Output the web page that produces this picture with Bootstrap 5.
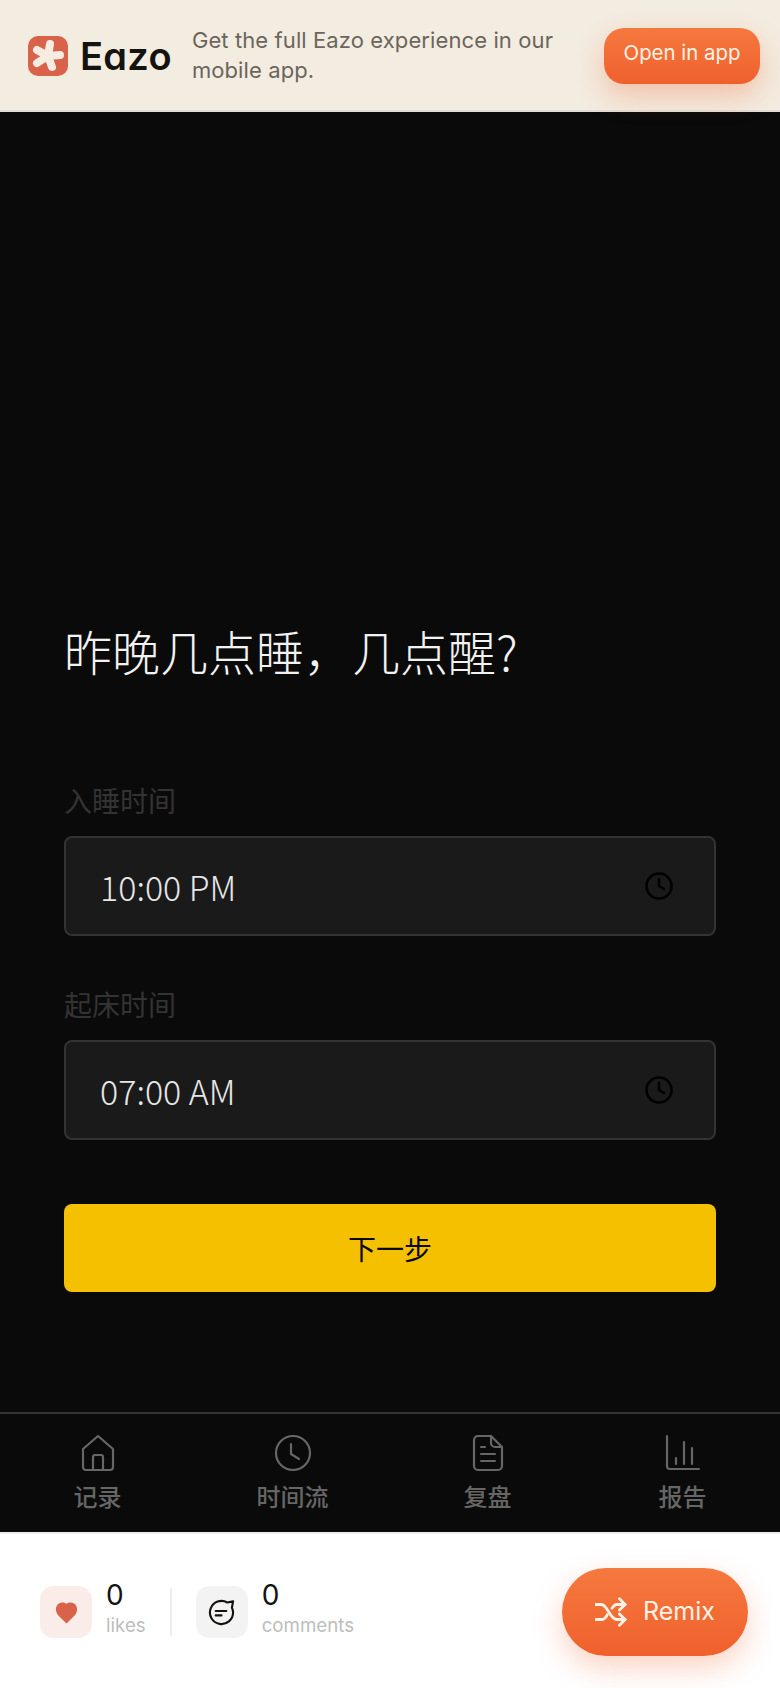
<!DOCTYPE html>
<html lang="en">
<head>
    <meta charset="UTF-8">
    <meta name="viewport" content="width=device-width, initial-scale=1.0">
    <title>Eazo</title>
    <link href="https://cdn.jsdelivr.net/npm/bootstrap@5.3.0/dist/css/bootstrap.min.css" rel="stylesheet">
    <style>
        body { width: 780px; height: 1688px; overflow: hidden; background: #fff; font-family: Inter, "Noto Sans CJK SC", sans-serif; }
        .app-banner { height: 112px; background: #f3ece0; border-bottom: 2px solid #e2ded6; padding: 2px 20px 0 28px; position: relative; z-index: 2; }
        .brand-word { font-size: 38px; font-weight: 600; color: #14130f; line-height: 1; margin-left: 12px; letter-spacing: .3px; font-feature-settings: "cv11"; }
        .banner-text { font-size: 22px; line-height: 30px; color: #6b655d; margin: 0 0 2px 20px; width: 400px; letter-spacing: .1px; }
        .open-btn { width: 156px; height: 56px; border: 0; border-radius: 20px; color: #fff3e6; font-size: 20.4px; padding: 0 0 6px; background: linear-gradient(#f5793f, #f0602c); box-shadow: 0 12px 28px rgba(240, 96, 44, .3); }
        .open-btn:hover { color: #fff3e6; }
        .quiz-screen { height: 1420px; background: #0a0a0a; }
        .quiz-body { height: 1300px; padding: 508px 64px 0; }
        .quiz-title { font-family: "Noto Sans CJK SC", sans-serif; font-size: 48px; font-weight: 300; line-height: 60px; color: #f2f2f2; margin: 0; }
        .time-label { font-family: "Noto Sans CJK SC", sans-serif; font-size: 28px; font-weight: 400; line-height: 36px; color: #333; margin-bottom: 18px; }
        .first-field { margin-top: 102px; }
        .second-field { margin-top: 50px; }
        .time-box { height: 100px; padding: 0 40px 0 34px; background: #1a1a1a; border: 2px solid #333; border-radius: 8px; color: #e6e6e6; font-family: "Noto Sans CJK SC", sans-serif; font-size: 34px; font-weight: 300; font-variant-numeric: tabular-nums; }
        .next-btn { width: 100%; height: 88px; margin-top: 64px; border: 0; border-radius: 8px; background: #f5c000; color: #0a0a0a; font-family: "Noto Sans CJK SC", sans-serif; font-size: 28px; }
        .next-btn:hover { background: #f5c000; color: #0a0a0a; }
        .tab-bar { height: 120px; border-top: 2px solid #333; }
        .tab-item { width: 195px; padding-top: 20px; color: #666; font-family: "Noto Sans CJK SC", sans-serif; font-size: 24px; font-weight: 500; line-height: 32px; }
        .tab-item svg { display: block; margin-bottom: 8px; }
        .action-bar { height: 156px; padding: 2px 32px 0 40px; border-top: 2px solid #eee; }
        .stat-icon { width: 52px; height: 52px; border-radius: 14px; }
        .stat-num { font-size: 28px; line-height: 30px; color: #14130f; margin-bottom: 4px; }
        .stat-name { font-size: 18.7px; line-height: 24px; color: #bdbdbd; }
        .stat-rule { width: 2px; height: 48px; background: #eee; margin: 0 24px 0 24px; }
        .stat-text { margin: 0 0 6px 14px; }
        .heart-box { background: #f9ece9; }
        .chat-box { background: #f3f3f3; }
        .remix-btn { width: 186px; height: 88px; border: 0; border-radius: 44px; color: #fff3e6; font-size: 25px; background: linear-gradient(#f5793f, #f0602c); box-shadow: 0 12px 30px rgba(240, 96, 44, .28); }
        .remix-btn:hover { color: #fff3e6; }
    </style>
</head>
<body>
    <div class="app-banner d-flex align-items-center">
        <svg width="40" height="40" viewBox="0 0 40 40">
            <rect width="40" height="40" rx="10" fill="#d9634a"/>
            <g stroke="#f6ece2" stroke-width="8" stroke-linecap="round">
                <line x1="20" y1="20" x2="22" y2="8"/>
                <line x1="20" y1="20" x2="32" y2="19"/>
                <line x1="20" y1="20" x2="24" y2="31"/>
                <line x1="20" y1="20" x2="9" y2="27"/>
                <line x1="20" y1="20" x2="9" y2="14"/>
            </g>
        </svg>
        <span class="brand-word">Eazo</span>
        <div class="banner-text flex-grow-1">Get the full Eazo experience in our mobile app.</div>
        <button class="btn open-btn flex-shrink-0">Open in app</button>
    </div>

    <div class="quiz-screen">
        <div class="quiz-body">
            <h1 class="quiz-title">昨晚几点睡&#65292;几点醒?</h1>
            <div class="time-label first-field">入睡时间</div>
            <div class="time-box d-flex align-items-center justify-content-between">
                <span>10:00 PM</span>
                <svg width="30" height="30" viewBox="0 0 30 30" fill="none" stroke="#000" stroke-width="2.6" stroke-linecap="round" stroke-linejoin="round"><circle cx="15" cy="15" r="12.5"/><path d="M15 8v7l5 3"/></svg>
            </div>
            <div class="time-label second-field">起床时间</div>
            <div class="time-box d-flex align-items-center justify-content-between">
                <span>07:00 AM</span>
                <svg width="30" height="30" viewBox="0 0 30 30" fill="none" stroke="#000" stroke-width="2.6" stroke-linecap="round" stroke-linejoin="round"><circle cx="15" cy="15" r="12.5"/><path d="M15 8v7l5 3"/></svg>
            </div>
            <button class="btn next-btn">下一步</button>
        </div>
        <div class="tab-bar d-flex">
            <div class="tab-item d-flex flex-column align-items-center">
                <svg width="36" height="38" viewBox="0 0 36 38" fill="none" stroke="#666" stroke-width="2.2" stroke-linejoin="round"><path d="M3 15 18 2l15 13v18a3 3 0 0 1-3 3H6a3 3 0 0 1-3-3z"/><path d="M13 36V23a2 2 0 0 1 2-2h6a2 2 0 0 1 2 2v13"/></svg>
                记录
            </div>
            <div class="tab-item d-flex flex-column align-items-center">
                <svg width="38" height="38" viewBox="0 0 38 38" fill="none" stroke="#666" stroke-width="2.2" stroke-linecap="round" stroke-linejoin="round"><circle cx="19" cy="19" r="17"/><path d="M17 10v10l8 5"/></svg>
                时间流
            </div>
            <div class="tab-item d-flex flex-column align-items-center">
                <svg width="32" height="38" viewBox="0 0 32 38" fill="none" stroke="#666" stroke-width="2.2" stroke-linecap="round" stroke-linejoin="round"><path d="M6 2h13l11 11v19a4 4 0 0 1-4 4H6a4 4 0 0 1-4-4V6a4 4 0 0 1 4-4z"/><path d="M19 2v7a4 4 0 0 0 4 4h7"/><path d="M9 13h4M9 20h14M9 27h14"/></svg>
                复盘
            </div>
            <div class="tab-item d-flex flex-column align-items-center">
                <svg width="36" height="38" viewBox="0 0 36 38" fill="none" stroke="#666" stroke-width="2.2" stroke-linecap="round" stroke-linejoin="round"><path d="M2 2v30a3 3 0 0 0 3 3h29"/><path d="M11 24v6M19 8v22M27 14v16"/></svg>
                报告
            </div>
        </div>
    </div>

    <div class="action-bar d-flex align-items-center">
        <div class="stat-icon heart-box d-flex align-items-center justify-content-center">
            <svg width="23" height="24" viewBox="0 0 24 24"><path d="M12 24 3 15C-1 10 1 2 8 2c2 0 3 .6 4 1.400C13 2.600 14 2 16 2c7 0 9 8 5 13z" fill="#d9634a"/></svg>
        </div>
        <div class="stat-text">
            <div class="stat-num">0</div>
            <div class="stat-name">likes</div>
        </div>
        <div class="stat-rule"></div>
        <div class="stat-icon chat-box d-flex align-items-center justify-content-center">
            <svg width="27" height="27" viewBox="0 0 28 28" fill="none" stroke="#14130f" stroke-width="2.2" stroke-linecap="round" stroke-linejoin="round"><path d="M26 2.500 20 3.600A12 12 0 1 0 26 14c0-1.800-.4-3.500-1.200-5z"/><path d="M8 12.500h11M8 17h6"/></svg>
        </div>
        <div class="stat-text">
            <div class="stat-num">0</div>
            <div class="stat-name">comments</div>
        </div>
        <button class="btn remix-btn ms-auto d-flex align-items-center justify-content-center gap-3">
            <svg width="32" height="32" viewBox="0 0 34 32" fill="none" stroke="#fff3e6" stroke-width="3" stroke-linecap="round" stroke-linejoin="round"><path d="M1 8h6c6 0 9 16 16 16h9"/><path d="M1 24h6c2.500 0 4.500-2 6-5M18 12c1.500-2 3-4 5-4h9"/><path d="M26 2l6 6-6 6M26 18l6 6-6 6"/></svg>
            Remix
        </button>
    </div>
    <script src="https://cdn.jsdelivr.net/npm/bootstrap@5.3.0/dist/js/bootstrap.bundle.min.js"></script>
</body>
</html>
